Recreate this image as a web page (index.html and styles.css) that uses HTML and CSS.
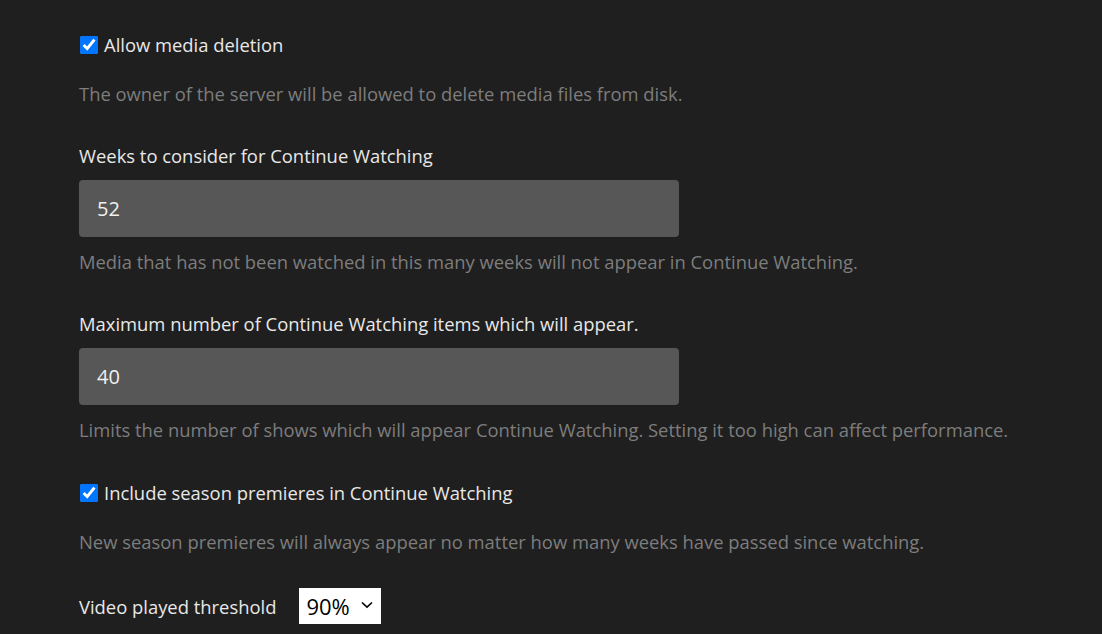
FILE: index.html
```html
<!DOCTYPE html>
<html lang="en">
<head>
<meta charset="utf-8">
<title>Settings</title>
<link rel="stylesheet" href="styles.css">
</head>
<body>
<div class="page">
  <label class="check-row first">
    <input type="checkbox" class="check" checked>
    <span>Allow media deletion</span>
  </label>
  <div class="desc after-check">The owner of the server will be allowed to delete media files from disk.</div>

  <div class="field">
    <div class="label">Weeks to consider for Continue Watching</div>
    <div class="input">52</div>
    <div class="desc after-input">Media that has not been watched in this many weeks will not appear in Continue Watching.</div>
  </div>

  <div class="field">
    <div class="label">Maximum number of Continue Watching items which will appear.</div>
    <div class="input">40</div>
    <div class="desc after-input">Limits the number of shows which will appear Continue Watching. Setting it too high can affect performance.</div>
  </div>

  <label class="check-row">
    <input type="checkbox" class="check" checked>
    <span>Include season premieres in Continue Watching</span>
  </label>
  <div class="desc after-check">New season premieres will always appear no matter how many weeks have passed since watching.</div>

  <div class="select-row">
    <span>Video played threshold</span>
    <div class="select">
      <span>90%</span>
      <svg class="chev" width="12" height="8" viewBox="0 0 12 8"><path d="M1 1.5 L6 6.2 L11 1.5" fill="none" stroke="#000" stroke-width="1.6"/></svg>
    </div>
  </div>
</div>
</body>
</html>
```
FILE: styles.css
```css
html, body {
  margin: 0;
  padding: 0;
  background: #1f1f1f;
  height: 100%;
  overflow: hidden;
}
.page {
  padding-left: 79px;
  font-family: "Open Sans", "Noto Sans", sans-serif;
  font-size: 18.4px;
  color: #e8e8e8;
  display: flex;
  flex-direction: column;
  align-items: flex-start;
}
.check-row {
  display: flex;
  align-items: center;
  gap: 6px;
  height: 24px;
  margin-top: 39px;
  line-height: 24px;
}
.check-row.first {
  margin-top: 33px;
}
.check {
  width: 18px;
  height: 18px;
  margin: 0 0 0 1px;
  accent-color: #0075ff;
}
.desc {
  color: #7d7d7d;
  line-height: 24px;
  height: 24px;
  white-space: nowrap;
}
.after-check {
  margin-top: 25px;
}
.field {
  display: flex;
  flex-direction: column;
  margin-top: 38px;
}
.label {
  line-height: 24px;
  height: 24px;
}
.input {
  margin-top: 12px;
  width: 600px;
  height: 57px;
  box-sizing: border-box;
  padding-left: 18px;
  background: #575757;
  border-radius: 4px;
  font-size: 20px;
  color: #f0f0f0;
  display: flex;
  align-items: center;
}
.after-input {
  margin-top: 13px;
}
.select-row {
  display: flex;
  align-items: center;
  gap: 23px;
  margin-top: 34px;
  height: 36px;
}
.select {
  width: 82px;
  height: 36px;
  box-sizing: border-box;
  background: #fff;
  color: #000;
  font-size: 22px;
  display: flex;
  align-items: center;
  padding-left: 7px;
  gap: 11px;
}
.chev {
  margin-top: -2px;
}
```
